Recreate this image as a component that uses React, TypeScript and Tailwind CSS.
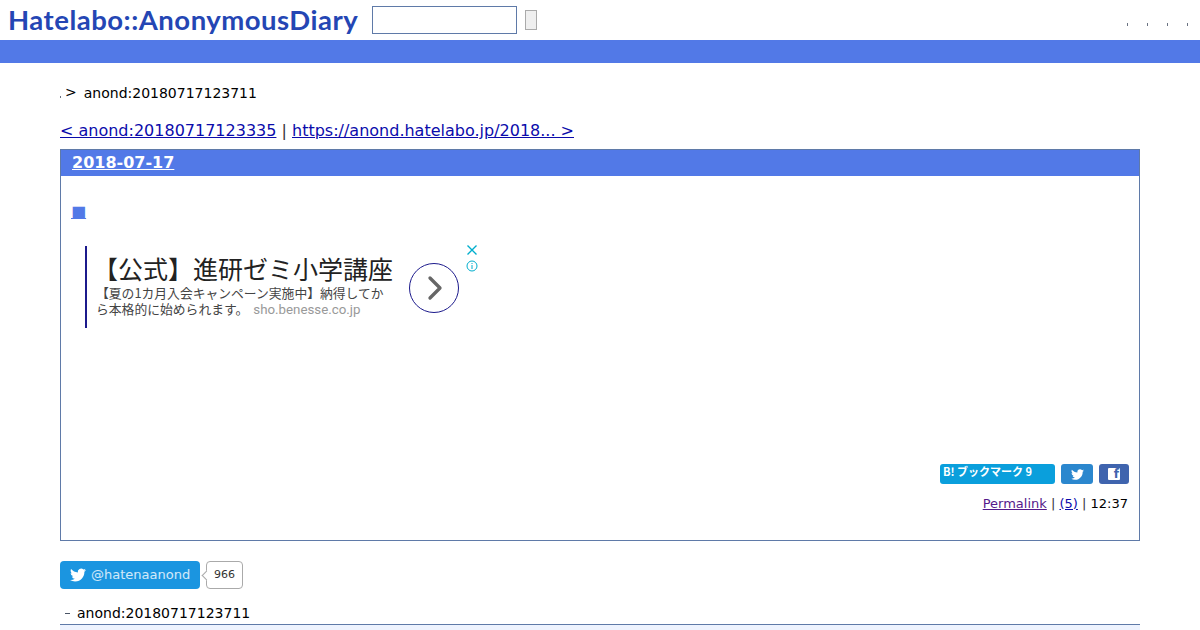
import { ChevronRight } from 'lucide-react';

const dejavu = { fontFamily: '"DejaVu Sans", sans-serif' };

function TwitterBird({ className }: { className?: string }) {
  return (
    <svg viewBox="0 0 24 24" className={className} fill="currentColor">
      <path d="M23.95 4.57a10 10 0 0 1-2.82.77 4.96 4.96 0 0 0 2.16-2.72c-.95.55-2 .96-3.12 1.19a4.92 4.92 0 0 0-8.38 4.48C7.69 8.1 4.07 6.13 1.64 3.16a4.82 4.82 0 0 0-.67 2.48c0 1.71.87 3.21 2.19 4.1a4.9 4.9 0 0 1-2.23-.62v.06a4.92 4.92 0 0 0 3.95 4.83 5 5 0 0 1-2.21.08 4.94 4.94 0 0 0 4.6 3.42A9.87 9.87 0 0 1 0 19.54a14 14 0 0 0 7.56 2.21c9.05 0 14-7.5 14-13.98 0-.21 0-.42-.02-.63a9.94 9.94 0 0 0 2.41-2.55z" />
    </svg>
  );
}

function HeaderDot() {
  return <span className="block h-[3px] w-px bg-gray-500" />;
}

function Ad() {
  return (
    <div className="flex h-[82px] w-[394px] items-start">
      <div className="flex h-[82px] w-[343px] flex-col border-l-2 border-[#1c1a8c] pl-[9px] pt-[7px]">
        <div
          className="-ml-[3px] h-[30px] whitespace-nowrap text-[25px] leading-[30px] text-[#222]"
          style={{ fontFamily: '"Noto Sans CJK JP", sans-serif' }}
        >
          【公式】進研ゼミ小学講座
        </div>
        <div
          className="mt-[2px] text-[12.8px] leading-[16px] text-[#444]"
          style={{ fontFamily: '"Noto Sans CJK JP", sans-serif' }}
        >
          <div className="whitespace-nowrap">【夏の1カ月入会キャンペーン実施中】納得してか</div>
          <div className="whitespace-nowrap">
            ら本格的に始められます。
            <span className="ml-[5px] text-[13.3px] text-[#999]" style={{ fontFamily: 'Roboto, sans-serif' }}>
              sho.benesse.co.jp
            </span>
          </div>
        </div>
      </div>
      <div className="ml-[-19px] mt-[17px] flex h-[50px] w-[50px] shrink-0 items-center justify-center rounded-full border border-[#1c1a8c] bg-white">
        <ChevronRight className="ml-px h-[40px] w-[40px] text-[#666]" strokeWidth={2} />
      </div>
      <div className="ml-[7px] -mt-[2px] flex flex-col items-center text-[#00aecd]">
        <svg viewBox="0 0 12 12" className="h-3 w-3" stroke="currentColor" strokeWidth="1.4">
          <path d="M1.5 1.5 10.5 10.5M10.5 1.5 1.5 10.5" />
        </svg>
        <svg viewBox="0 0 12 12" className="mt-[4px] h-3 w-3" fill="none" stroke="currentColor">
          <circle cx="6" cy="6" r="5" />
          <path d="M6 5v4M6 3v1" />
        </svg>
      </div>
    </div>
  );
}

export default function App() {
  return (
    <div className="h-[630px] w-[1200px] overflow-hidden bg-white text-black" style={dejavu}>
      {/* Header */}
      <div className="flex h-10 items-center pl-[8px]">
        <a
          className="w-[350px] whitespace-nowrap text-[27.5px] font-bold leading-none tracking-[0.5px] text-[#2446b4]"
          style={{ fontFamily: 'Lato, sans-serif' }}
        >
          Hatelabo::AnonymousDiary
        </a>
        <div className="ml-[14px] h-7 w-[145px] border border-[#5f7aa8] bg-white" />
        <div className="ml-[8px] h-5 w-3 border border-[#aaa] bg-[#efefef]" />
        <div className="ml-auto flex gap-[19px] pr-[12px] pt-[8px]">
          <HeaderDot />
          <HeaderDot />
          <HeaderDot />
          <HeaderDot />
        </div>
      </div>
      <div className="h-[23px] bg-[#5279e7]" />

      <div className="px-[60px]">
        {/* Breadcrumb */}
        <div className="mt-[21px] flex h-[18px] items-center text-[14px] leading-[18px]">
          <span className="mt-[7px] block h-[2px] w-px bg-gray-500" />
          <span className="ml-[4px] -translate-y-px">&gt;</span>
          <span className="ml-[7px]">anond:20180717123711</span>
        </div>

        {/* Prev / next */}
        <div className="mt-[19px] h-[19px] text-[16px] leading-[19px] text-[#333]">
          <a className="text-[#0b0bab] underline">&lt; anond:20180717123335</a>
          {' | '}
          <a className="text-[#0b0bab] underline">https://anond.hatelabo.jp/2018... &gt;</a>
        </div>

        {/* Day box */}
        <div className="mt-[9px] flex h-[392px] flex-col border border-[#5f7aa8]">
          <div className="h-[26px] bg-[#5279e7] pl-[11px] text-[16px] font-bold leading-[25px] text-white">
            <a className="underline">2018-07-17</a>
          </div>
          <div className="pl-[10px] pt-[26px]">
            <a className="block h-5 w-[15px] text-[16px] leading-5 text-[#5279e7] underline">■</a>
          </div>
          <div className="ml-[24px] mt-[24px]">
            <Ad />
          </div>
          <div className="mt-auto pr-[10px] pb-[29px]">
            <div className="flex justify-end gap-[6px]">
              <div className="h-5 w-[115px] rounded-[3px] bg-[#0a9fdc] pl-[3px] text-[11px] font-bold leading-[15px] text-white">
                <span style={{ fontFamily: '"Noto Sans CJK JP", sans-serif' }}>B! ブックマーク 9</span>
              </div>
              <div className="flex h-5 w-8 items-center justify-center rounded-[3px] bg-[#2b87ce] text-white">
                <TwitterBird className="h-[13px] w-[13px]" />
              </div>
              <div className="flex h-5 w-[30px] items-center justify-center rounded-[3px] bg-[#3f64ae]">
                <span className="flex h-3 w-3 items-end justify-end rounded-[1px] bg-white pr-[1px] text-[12px] font-bold leading-[11px] text-[#3f64ae]">
                  f
                </span>
              </div>
            </div>
            <div className="mt-[12px] pr-px text-right text-[13px] leading-[15px] text-[#333]">
              <a className="text-[#551a8b] underline">Permalink</a>
              {' | '}
              <a className="text-[#0b0bab] underline">(5)</a>
              {' | '}
              <span className="text-black">12:37</span>
            </div>
          </div>
        </div>

        {/* Twitter follow */}
        <div className="mt-5 flex h-7 items-center">
          <div className="flex h-7 w-[140px] items-center rounded-[4px] bg-[#1b95e0] pl-[10px] text-[13px] text-white/80">
            <TwitterBird className="h-4 w-4 text-white" />
            <span className="ml-[5px]">@hatenaanond</span>
          </div>
          <div className="relative ml-[6px] flex h-7 w-[37px] items-center justify-center rounded-[4px] border border-[#aaa] bg-white text-[11px] text-[#333]">
            <span className="absolute left-[-4px] top-[10px] h-[7px] w-[7px] rotate-45 border-b border-l border-[#aaa] bg-white" />
            966
          </div>
        </div>

        {/* Footer title */}
        <div className="mt-[16px] flex h-[17px] items-center text-[14px] leading-[17px]">
          <span className="ml-[5px] mb-px block h-px w-[5px] bg-gray-600" />
          <span className="ml-[7px]">anond:20180717123711</span>
        </div>
        <div className="mt-[2px] h-[6px] border-t border-[#5f7aa8] bg-[#eef3fe]" />
      </div>
    </div>
  );
}
